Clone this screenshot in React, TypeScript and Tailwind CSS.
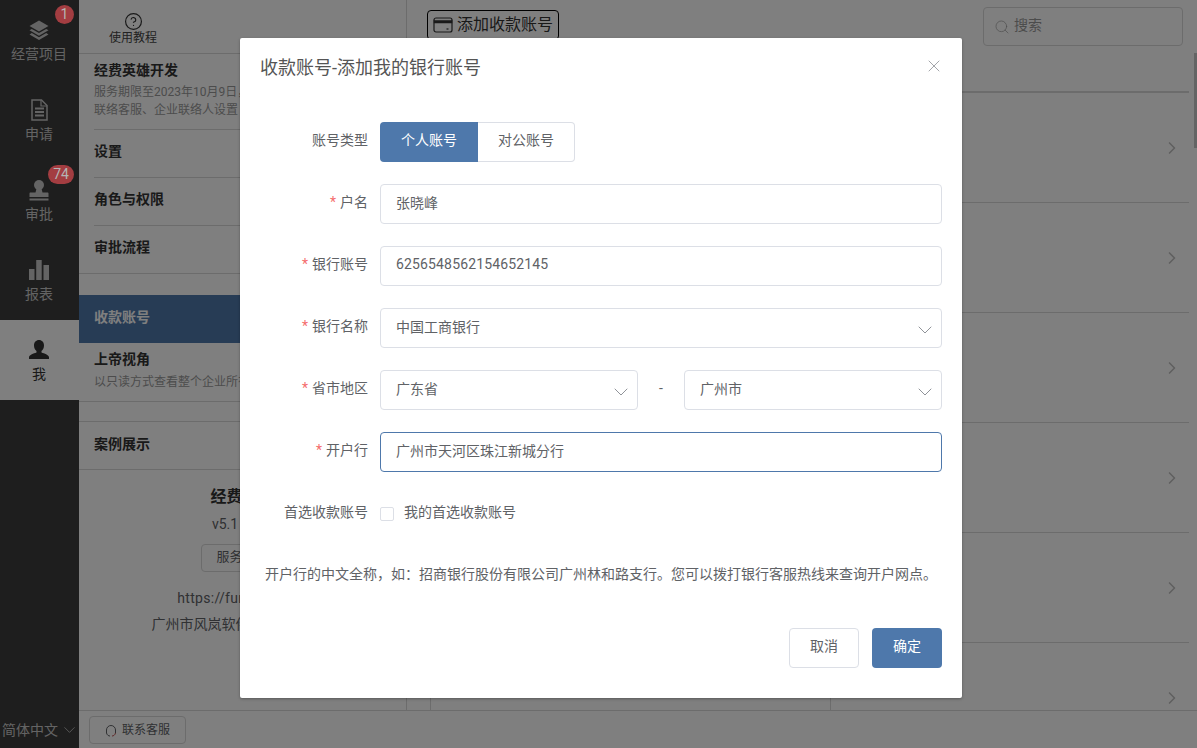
import { ChevronDown, ChevronRight, CircleHelp, Search, X } from "lucide-react";

const navItems = [
  { label: "经营项目", icon: <LayersIcon />, badge: "1" },
  { label: "申请", icon: <FileIcon /> },
  { label: "审批", icon: <StampIcon />, badge: "74" },
  { label: "报表", icon: <BarsIcon /> },
];

function LayersIcon() {
  return (
    <svg width="22" height="22" viewBox="0 0 22 22" fill="currentColor">
      <path d="M11 1.5 20.5 7 11 12.5 1.5 7Z" />
      <path d="M3.8 9.9 11 14.1l7.2-4.2 2.3 1.4L11 16.8 1.5 11.3Z" />
      <path d="M3.8 14.1 11 18.3l7.2-4.2 2.3 1.3L11 21 1.5 15.4Z" />
    </svg>
  );
}

function FileIcon() {
  return (
    <svg width="22" height="22" viewBox="0 0 22 22" fill="none" stroke="currentColor">
      <path d="M4 1h9.5L19 6.5V21H4Z" strokeWidth="1.5" />
      <path d="M13 1v6h6" strokeWidth="1.2" />
      <path d="M7 9.5h9M7 13h9M7 16.5h9" strokeWidth="2" />
    </svg>
  );
}

function StampIcon() {
  return (
    <svg width="22" height="22" viewBox="0 0 22 22" fill="currentColor">
      <circle cx="11" cy="6" r="5" />
      <path d="M8.5 9.5h5l1 4h5c.6 0 1 .4 1 1V18H1.5v-3.5c0-.6.4-1 1-1h5Z" />
      <rect x="1.5" y="19.5" width="19" height="2" />
    </svg>
  );
}

function BarsIcon() {
  return (
    <svg width="22" height="22" viewBox="0 0 22 22" fill="currentColor">
      <rect x="1" y="10" width="5.5" height="11" />
      <rect x="8.2" y="1" width="5.5" height="20" />
      <rect x="15.5" y="6" width="5.5" height="15" />
    </svg>
  );
}

function UserIcon() {
  return (
    <svg width="22" height="22" viewBox="0 0 22 22" fill="currentColor">
      <path d="M11 1c3 0 5 2.3 5 5.500 0 2.400-1 4.400-2.500 5.600v1.400c3 1 7 2.400 7.500 4.500v2H1v-2c.5-2.100 4.500-3.500 7.500-4.500v-1.400C7 11 6 8.900 6 6.500 6 3.300 8 1 11 1Z" />
    </svg>
  );
}

function Label({ text, required }: { text: string; required?: boolean }) {
  return (
    <div className="w-[108px] mr-3 pb-1 shrink-0 text-right text-sm text-[#606266]">
      {required && <span className="text-[#f56c6c] mr-1">*</span>}
      {text}
    </div>
  );
}

function TextField({ value, focused, tracking }: { value: string; focused?: boolean; tracking?: boolean }) {
  return (
    <input
      readOnly
      value={value}
      className={`w-full h-10 px-[15px] pb-[5px] rounded-[4px] border bg-white text-sm text-[#606266] outline-none ${
        focused ? "border-[#4e78ab]" : "border-[#dcdfe6]"
      } ${tracking ? "tracking-[0.15px]" : ""}`}
    />
  );
}

function SelectField({ value }: { value: string }) {
  return (
    <div className="relative flex-1">
      <TextField value={value} />
      <ChevronDown size={24} strokeWidth={1} className="absolute right-[5px] top-[10px] text-[#909399]" />
    </div>
  );
}

function SettingsRow({ title, lines }: { title: string; lines?: string[] }) {
  return (
    <div className="pl-[15px]">
      <div className={`border-b border-[#d8d8d8] ${lines ? "h-[76px] pt-[6px]" : "h-12 pb-[6px] flex items-center"}`}>
        <div className="text-sm font-bold text-[#333] leading-[20px]">{title}</div>
        {lines && (
          <div className="mt-[3px]">
            {lines.map((line) => (
              <div key={line} className="text-xs text-[#999] leading-[18px] whitespace-nowrap">
                {line}
              </div>
            ))}
          </div>
        )}
      </div>
    </div>
  );
}

export default function App() {
  return (
    <div
      className="relative flex w-[1197px] h-[748px] overflow-hidden bg-white"
      style={{ fontFamily: 'Roboto, "Noto Sans CJK SC", sans-serif' }}
    >
      {/* left nav */}
      <div className="w-[79px] shrink-0 flex flex-col bg-[#3c3c3c] text-[#c8c8c8]">
        {navItems.map((item) => (
          <div key={item.label} className="relative h-20 flex flex-col items-center justify-center gap-[3px] pt-[2px] pr-[1px]">
            {item.icon}
            <span className="text-sm leading-5">{item.label}</span>
            {item.badge && (
              <span className="absolute z-20 right-[5px] top-[5px] min-w-[19px] h-[19px] px-[5px] rounded-full bg-[#a33d41] text-[#b4b4b4] text-sm leading-[19px] text-center">
                {item.badge}
              </span>
            )}
          </div>
        ))}
        <div className="h-20 flex flex-col items-center justify-center gap-[3px] pt-[2px] pr-[1px] bg-white text-[#333]">
          <UserIcon />
          <span className="text-sm leading-5">我</span>
        </div>
        <div className="mt-auto h-[38px] flex items-center pl-[2px] pt-[2px] gap-[2px] text-sm whitespace-nowrap">
          简体中文
          <ChevronDown size={20} strokeWidth={1} />
        </div>
      </div>

      <div className="flex-1 min-w-0 flex flex-col">
        <div className="flex-1 min-h-0 flex">
          {/* settings column */}
          <div className="w-[328px] shrink-0 border-r border-[#d8d8d8] flex flex-col">
            <div className="h-[54px] shrink-0 border-b border-[#d8d8d8] pl-[30px] pt-[12px]">
              <div className="w-12 flex flex-col items-center text-[#333]">
                <CircleHelp size={19} strokeWidth={1.5} />
                <span className="text-xs leading-[15px] text-[#444]">使用教程</span>
              </div>
            </div>
            <SettingsRow title="经费英雄开发" lines={["服务期限至2023年10月9日，到期后请及时续费", "联络客服、企业联络人设置"]} />
            <SettingsRow title="设置" />
            <SettingsRow title="角色与权限" />
            <div className="pl-[15px] pb-[6px] h-12 flex items-center text-sm font-bold text-[#333] border-b border-[#d8d8d8]">审批流程</div>
            <div className="h-[21px] shrink-0" />
            <div className="pl-[15px] pb-1 h-12 shrink-0 flex items-center text-sm font-bold text-white bg-[#4e78ab]">收款账号</div>
            <div className="pl-[15px] h-[59px] shrink-0 pt-[6px] border-b border-[#d8d8d8]">
              <div className="text-sm font-bold text-[#333] leading-5">上帝视角</div>
              <div className="mt-[3px] text-xs text-[#999] leading-[20px] whitespace-nowrap">以只读方式查看整个企业所有数据</div>
            </div>
            <div className="h-5 shrink-0 border-b border-[#d8d8d8]" />
            <div className="pl-[15px] pb-1 h-12 shrink-0 flex items-center text-sm font-bold text-[#333] border-b border-[#d8d8d8]">案例展示</div>
            <div className="flex flex-col items-center pt-[15px] text-sm text-[#606266]">
              <div className="text-base font-bold text-[#333] leading-6">经费英雄</div>
              <div className="mt-[3px] leading-6 whitespace-nowrap">v5.1 2309</div>
              <div className="mt-[8px] h-[28px] px-[14px] rounded-[4px] border border-[#d8d8d8] text-[13px] leading-[24px] whitespace-nowrap">服务协议</div>
              <div className="mt-[16px] leading-5 whitespace-nowrap tracking-[0.3px]">https://funhero.com</div>
              <div className="mt-[6px] leading-5 whitespace-nowrap">广州市风岚软件科技有限公司</div>
            </div>
          </div>

          {/* list column */}
          <div className="relative flex-1 min-w-0 flex flex-col">
            <div className="h-[93px] shrink-0 mr-2 border-b-2 border-[#d8d8d8] flex items-start justify-between pl-5 pt-[7px]">
              <button className="mt-[3px] h-[30px] w-[132px] flex items-center justify-center gap-1 rounded-[4px] border border-black text-base text-[#333]">
                <svg width="20" height="16" viewBox="0 0 20 16" fill="none" stroke="currentColor">
                  <rect x="1" y="1" width="18" height="14" rx="2" strokeWidth="1.2" />
                  <rect x="1" y="3.500" width="18" height="2.500" fill="currentColor" strokeWidth="0.5" />
                  <path d="M13.500 12h2" strokeWidth="1.2" />
                </svg>
                添加收款账号
              </button>
              <div className="w-[200px] h-[39px] mr-[6px] pl-[10px] pb-1 flex items-center gap-1 rounded-[4px] border border-[#d8d8d8] text-sm text-[#999]">
                <Search size={16} strokeWidth={1} className="mt-1" />
                搜索
              </div>
            </div>
            <div className="flex-1 min-h-0 overflow-hidden ml-[23px] mr-2">
              {[0, 1, 2, 3, 4, 5].map((row) => (
                <div key={row} className="h-[110px] flex border-b border-[#d8d8d8]">
                  <div className="w-[401px] shrink-0 border-l border-r border-[#d8d8d8]" />
                  <div className="flex-1 flex items-center justify-end pr-[7px] text-[#c0c0c0]">
                    <ChevronRight size={20} strokeWidth={2} />
                  </div>
                </div>
              ))}
            </div>
            <div className="absolute right-0 top-[53px] w-[3px] h-[95px] bg-[#c8c8c8]" />
          </div>
        </div>

        {/* bottom bar */}
        <div className="h-[38px] shrink-0 border-t border-[#d8d8d8] pl-[10px] pt-[5px]">
          <div className="w-[97px] h-[28px] flex items-center justify-center gap-[5px] rounded-[4px] border border-[#d8d8d8] text-xs text-[#606266]">
            <svg width="12" height="13" viewBox="0 0 12 13" fill="none" stroke="currentColor" strokeWidth="1">
              <path d="M1.500 9V6a4.500 4.500 0 0 1 9 0v3" />
              <path d="M1.500 9c.5 2 2 3 3.500 3" />
              <path d="M10.500 9c-.5 2-2 3-3.500 3" stroke="#c05050" />
            </svg>
            联系客服
          </div>
        </div>
      </div>

      {/* overlay + dialog */}
      <div className="absolute inset-0 z-10 bg-black/50 flex justify-center items-start pt-[38px] pl-[5px]">
        <div className="w-[722px] h-[660px] bg-white rounded-[2px] shadow-[0_1px_3px_rgba(0,0,0,0.3)] px-5">
          <div className="h-[84px] flex items-start justify-between pt-[15px]">
            <div className="mt-[1px] text-lg leading-[28px] text-[#555]">收款账号-添加我的银行账号</div>
            <X size={20} strokeWidth={1} className="mt-[3px] -mr-[2px] text-[#909399]" />
          </div>

          <div className="flex items-center h-10 mb-[22px]">
            <Label text="账号类型" />
            <div className="flex h-10 text-sm">
              <div className="w-[98px] pb-1 flex items-center justify-center rounded-l-[4px] bg-[#4e78ab] text-white">个人账号</div>
              <div className="w-[97px] pb-1 flex items-center justify-center rounded-r-[4px] border border-l-0 border-[#dcdfe6] text-[#606266]">对公账号</div>
            </div>
          </div>
          <div className="flex items-center h-10 mb-[22px]">
            <Label text="户名" required />
            <TextField value="张晓峰" />
          </div>
          <div className="flex items-center h-10 mb-[22px]">
            <Label text="银行账号" required />
            <TextField value="6256548562154652145" tracking />
          </div>
          <div className="flex items-center h-10 mb-[22px]">
            <Label text="银行名称" required />
            <SelectField value="中国工商银行" />
          </div>
          <div className="flex items-center h-10 mb-[22px]">
            <Label text="省市地区" required />
            <SelectField value="广东省" />
            <div className="w-[46px] pb-1 shrink-0 text-center text-sm text-[#606266]">-</div>
            <SelectField value="广州市" />
          </div>
          <div className="flex items-center h-10 mb-[22px]">
            <Label text="开户行" required />
            <TextField value="广州市天河区珠江新城分行" focused />
          </div>
          <div className="flex items-center h-10">
            <Label text="首选收款账号" />
            <span className="w-[14px] h-[14px] rounded-[2px] border border-[#dcdfe6]" />
            <span className="ml-[10px] pb-1 text-sm text-[#606266]">我的首选收款账号</span>
          </div>

          <div className="mt-[30px] pl-[5px] text-sm leading-5 text-[#606266] whitespace-nowrap">
            开户行的中文全称，如：招商银行股份有限公司广州林和路支行。您可以拨打银行客服热线来查询开户网点。
          </div>

          <div className="mt-[44px] flex justify-end gap-[13px] text-sm">
            <div className="w-[70px] h-10 pb-[5px] flex items-center justify-center rounded-[4px] border border-[#dcdfe6] text-[#606266]">取消</div>
            <div className="w-[70px] h-10 pb-[5px] flex items-center justify-center rounded-[4px] bg-[#4e78ab] text-white">确定</div>
          </div>
        </div>
      </div>
    </div>
  );
}
